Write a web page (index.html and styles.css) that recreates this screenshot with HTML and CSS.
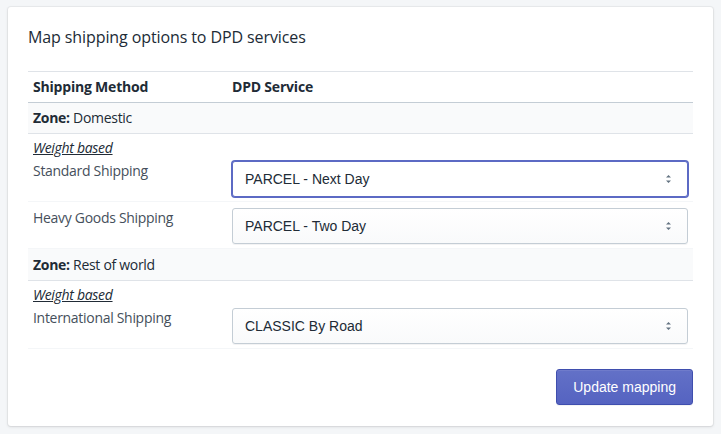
FILE: index.html
```html
<!DOCTYPE html>
<html>
<head>
<meta charset="utf-8">
<link rel="stylesheet" href="styles.css">
</head>
<body>
<div class="card">
  <h2 class="title">Map shipping options to DPD services</h2>
  <div class="table">
    <div class="row head">
      <div class="c1">Shipping Method</div>
      <div class="c2">DPD Service</div>
    </div>
    <div class="row zone"><div class="c1"><b>Zone:</b> Domestic</div></div>
    <div class="group-label"><span>Weight based</span></div>
    <div class="row method">
      <div class="c1 mtext">Standard Shipping</div>
      <div class="c2"><div class="select focused"><span>PARCEL - Next Day</span><svg class="arrows" width="7" height="10" viewBox="0 0 7 10"><path d="M3.5 1 L6 3.5 H1 Z M3.5 9 L6 6.5 H1 Z" fill="#637381"/></svg></div></div>
    </div>
    <div class="row method">
      <div class="c1 mtext">Heavy Goods Shipping</div>
      <div class="c2"><div class="select"><span>PARCEL - Two Day</span><svg class="arrows" width="7" height="10" viewBox="0 0 7 10"><path d="M3.5 1 L6 3.5 H1 Z M3.5 9 L6 6.5 H1 Z" fill="#637381"/></svg></div></div>
    </div>
    <div class="row zone tall"><div class="c1"><b>Zone:</b> Rest of world</div></div>
    <div class="group-label"><span>Weight based</span></div>
    <div class="row method">
      <div class="c1 mtext">International Shipping</div>
      <div class="c2"><div class="select"><span>CLASSIC By Road</span><svg class="arrows" width="7" height="10" viewBox="0 0 7 10"><path d="M3.5 1 L6 3.5 H1 Z M3.5 9 L6 6.5 H1 Z" fill="#637381"/></svg></div></div>
    </div>
  </div>
  <div class="actions">
    <button class="btn">Update mapping</button>
  </div>
</div>
</body>
</html>
```

FILE: styles.css
```css
html, body {
  margin: 0;
  padding: 0;
  background: #f4f6f8;
}
body {
  padding: 7px 8px 8px 8px;
  font-family: "Segoe UI", "Open Sans", "Noto Sans", sans-serif;
  font-size: 14px;
  line-height: 20px;
  color: #212b36;
}
.card {
  background: #fff;
  border-radius: 3px;
  box-shadow: 0 0 0 1px rgba(63,63,68,0.05), 0 1px 3px 0 rgba(63,63,68,0.15);
  padding: 20px 20px 20px 20px;
  height: 419px;
  box-sizing: border-box;
}
.title {
  margin: 0;
  font-size: 16px;
  font-weight: 400;
  line-height: 20px;
  color: #212b36;
  letter-spacing: -0.1px;
}
.table {
  margin-top: 24px;
  border-top: 1px solid #dfe3e8;
  letter-spacing: -0.3px;
}
.row {
  display: flex;
}
.c1 {
  width: 194px;
  padding: 0 0 0 5px;
}
.c2 {
  flex: 1;
  padding: 0 5px;
}
.head {
  height: 30px;
  align-items: center;
  font-weight: 700;
  border-bottom: 1px solid #c4cdd5;
}
.head .c1, .head .c2 { letter-spacing: -0.2px; }
.zone {
  height: 30px;
  align-items: center;
  background: #f9fafb;
  border-bottom: 1px solid #dfe3e8;
}
.zone.tall {
  height: 31px;
}
.zone .c1 { width: auto; }
.group-label {
  height: 21px;
  padding: 5px 5px 0;
  box-sizing: border-box;
  line-height: 17px;
  font-style: italic;
}
.group-label span {
  text-decoration: underline;
  color: #212b36;
}
.method {
  border-bottom: 1px solid #f4f6f8;
  padding: 6px 0 4px;
  height: 36px;
}
.mtext {
  color: #454f5b;
  line-height: 20px;
}
.select {
  height: 36px;
  box-sizing: border-box;
  border: 1px solid #c4cdd5;
  border-radius: 3px;
  background: linear-gradient(180deg, #fff, #f9fafb);
  box-shadow: 0 1px 0 0 rgba(22,29,37,0.05);
  display: flex;
  align-items: center;
  justify-content: space-between;
  padding: 0 15px 0 12px;
  font-family: "Liberation Sans", Arial, sans-serif;
  font-size: 14px;
  letter-spacing: 0;
  color: #212b36;
}
.select.focused {
  border-color: #5c6ac4;
  box-shadow: 0 0 0 1px #5c6ac4;
  background: #fff;
}
.arrows { display: block; }
.actions {
  display: flex;
  justify-content: flex-end;
  margin-top: 20px;
}
.btn {
  height: 36px;
  padding: 0 16px;
  border: 1px solid #3f4eae;
  border-radius: 3px;
  background: linear-gradient(180deg, #6371c7, #5563c1);
  box-shadow: inset 0 1px 0 0 #6f7bcb, 0 1px 0 0 rgba(22,29,37,0.05);
  color: #fff;
  font-family: "Liberation Sans", Arial, sans-serif;
  font-size: 14px;
}
```
